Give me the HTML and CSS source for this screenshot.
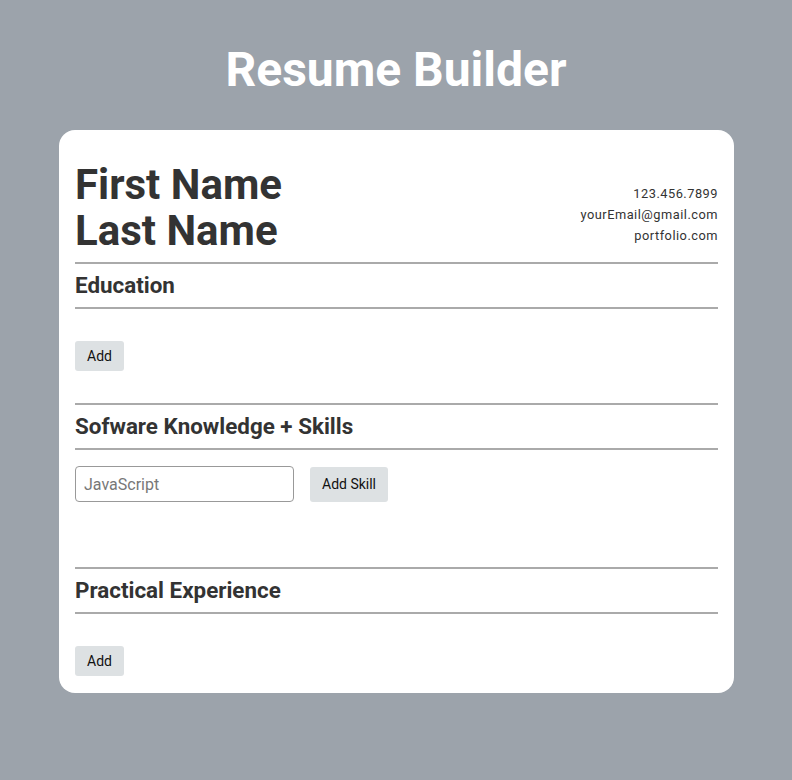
FILE: index.html
```html
<!DOCTYPE html>
<html>
<head>
<meta charset="utf-8">
<link rel="stylesheet" href="styles.css">
</head>
<body>
<h1 class="app-title">Resume Builder</h1>
<main class="card">
  <header class="resume-header">
    <h2 class="name">First Name<br>Last Name</h2>
    <div class="contact">
      <div>123.456.7899</div>
      <div>yourEmail@gmail.com</div>
      <div>portfolio.com</div>
    </div>
  </header>
  <section class="section">
    <h3 class="section-title">Education</h3>
    <div class="section-body edu">
      <button class="btn">Add</button>
    </div>
  </section>
  <section class="section">
    <h3 class="section-title">Sofware Knowledge + Skills</h3>
    <div class="section-body skills">
      <form class="skill-form">
        <input class="skill-input" type="text" placeholder="JavaScript">
        <button class="btn btn-skill" type="button">Add Skill</button>
      </form>
      <ul class="skill-list"></ul>
    </div>
  </section>
  <section class="section">
    <h3 class="section-title">Practical Experience</h3>
    <div class="section-body exp">
      <button class="btn">Add</button>
    </div>
  </section>
</main>
</body>
</html>
```
FILE: styles.css
```css
* { box-sizing: border-box; }
body {
  margin: 0;
  background: #9ca3ab;
  font-family: Roboto, "Liberation Sans", sans-serif;
  color: #333;
  padding-top: 40px;
  padding-bottom: 40px;
}
.app-title {
  margin: 0 0 30px;
  text-align: center;
  color: #fff;
  font-size: 48px;
  line-height: 60px;
  font-weight: 700;
}
.card {
  width: 675px;
  margin: 0 0 0 59px;
  background: #fff;
  border-radius: 16px;
  padding: 32px 16px 17px;
}
.resume-header {
  display: flex;
  justify-content: space-between;
  align-items: flex-end;
  padding-bottom: 8px;
}
.name {
  margin: 0;
  font-size: 42px;
  line-height: 46px;
  font-weight: 700;
  color: #333;
}
.contact {
  text-align: right;
  font-size: 12.8px;
  line-height: 21px;
  letter-spacing: 0.5px;
  color: #333;
  padding-bottom: 8px;
}
.section-title {
  margin: 0;
  border-top: 2px solid #aaa;
  border-bottom: 2px solid #aaa;
  font-size: 22.4px;
  line-height: 43px;
  font-weight: 700;
  color: #333;
}
.section-body.edu { padding: 32px 0 32px; }
.section-body.exp { padding: 32px 0 0; }
.section-body.skills { padding: 16px 0 0; }
.skill-form {
  display: flex;
  align-items: center;
  gap: 16px;
  margin: 0;
}
.skill-input {
  width: 219px;
  height: 36px;
  border: 1px solid #999;
  border-radius: 4px;
  padding: 0 8px;
  font-family: Roboto, "Liberation Sans", sans-serif;
  font-size: 16px;
  color: #333;
}
.skill-input::placeholder { color: #777; }
.skill-list {
  margin: 0;
  padding: 0;
  height: 65px;
  list-style: none;
}
.btn {
  font-family: Roboto, "Liberation Sans", sans-serif;
  background: #dde1e3;
  border: none;
  border-radius: 3px;
  font-size: 14px;
  color: #111;
  height: 30px;
  padding: 0 12px;
  display: block;
}
.btn-skill {
  height: 35px;
  padding: 0 12px;
}
```
